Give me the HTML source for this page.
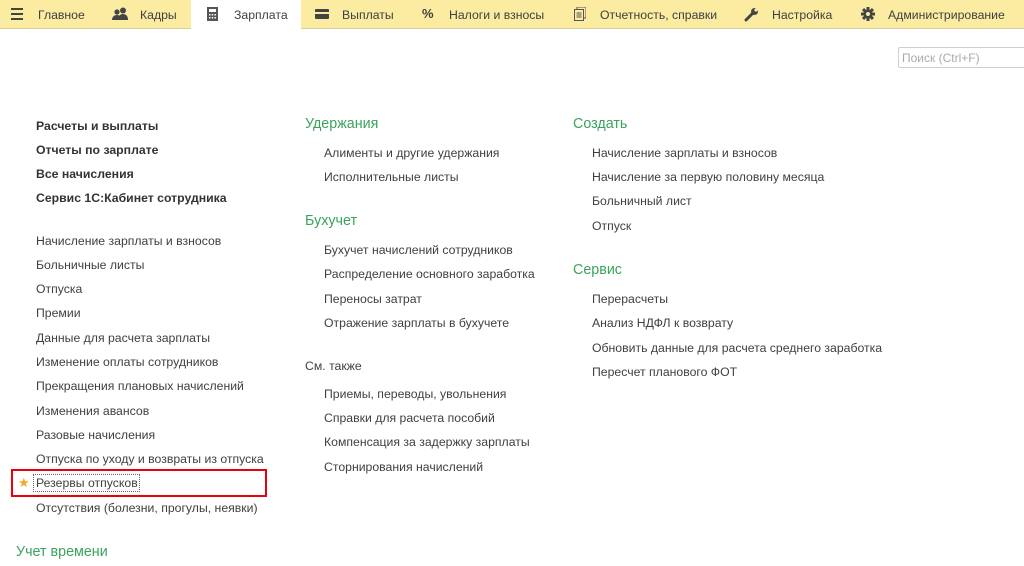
<!DOCTYPE html>
<html><head><meta charset="utf-8"><style>
*{margin:0;padding:0;box-sizing:border-box}
body{width:1024px;height:566px;overflow:hidden;background:#fff;font-family:"Liberation Sans",Arial,sans-serif;font-size:12.25px;color:#404040;position:relative}
.bar{position:absolute;left:0;top:0;width:1024px;height:29px;background:#fbeca1;border-bottom:1px solid #d9cf9a}
.act{position:absolute;left:191px;top:0;width:110px;height:30px;background:#fff}
.t{position:absolute;white-space:nowrap;line-height:16px;margin-top:1px}
.tab{top:6px;color:#404040;font-size:12.25px}
.ic{position:absolute}
.h{color:#3aa35d;font-size:14.3px}
.b{font-weight:bold;color:#333}
.search{position:absolute;left:898px;top:47px;width:130px;height:21px;border:1px solid #cfcfcf;border-radius:2px;color:#aaa;font-size:12px;padding:3px 0 0 3px}
.red{position:absolute;left:11px;top:469px;width:256px;height:28px;border:2px solid #e8000d}
.dot{position:absolute;left:33px;top:474px;width:107px;height:18px;border:1px dotted #666}
</style></head><body>
<div class="bar"></div><div class="act"></div>
<svg class="ic" style="left:11px;top:8px" width="12" height="12"><rect x="0" y="0" width="12" height="2" fill="#444"/><rect x="0" y="5" width="12" height="2" fill="#444"/><rect x="0" y="10" width="12" height="2" fill="#444"/></svg>
<div class="t tab" style="left:38px">Главное</div>
<svg class="ic" style="left:112px;top:7px" width="17" height="14"><circle cx="11" cy="3.5" r="3" fill="#444"/><path d="M6 13c0-4 2-6 5-6s5 2 5 6z" fill="#444"/><circle cx="5" cy="5" r="2.6" fill="#444"/><path d="M0 13c0-3 2-5 5-5s4 2 4 5z" fill="#444"/></svg>
<div class="t tab" style="left:140px">Кадры</div>
<svg class="ic" style="left:207px;top:7px" width="11" height="14"><rect x="0" y="0" width="11" height="14" fill="#555"/><rect x="2" y="2" width="7" height="3" fill="#fff"/><g fill="#fff"><rect x="2" y="7" width="1.5" height="1.5"/><rect x="4.7" y="7" width="1.5" height="1.5"/><rect x="7.4" y="7" width="1.5" height="1.5"/><rect x="2" y="10" width="1.5" height="1.5"/><rect x="4.7" y="10" width="1.5" height="1.5"/><rect x="7.4" y="10" width="1.5" height="1.5"/></g></svg>
<div class="t tab" style="left:234px">Зарплата</div>
<svg class="ic" style="left:315px;top:9px" width="14" height="10"><rect width="14" height="10" rx="1" fill="#444"/><rect y="3" width="14" height="2" fill="#fbeca1"/></svg>
<div class="t tab" style="left:342px">Выплаты</div>
<div class="t tab" style="left:422px;font-weight:bold;font-size:13px;top:5px">%</div>
<div class="t tab" style="left:449px">Налоги и взносы</div>
<svg class="ic" style="left:574px;top:7px" width="12" height="14"><rect x="3" y="0" width="9" height="11" fill="none" stroke="#555"/><rect x="0.5" y="2.5" width="9" height="11" fill="#fbeca1" stroke="#555"/><path d="M2.5 6h5M2.5 8h5M2.5 10h5" stroke="#555"/></svg>
<div class="t tab" style="left:600px">Отчетность, справки</div>
<svg class="ic" style="left:744px;top:7px" width="15" height="15"><path d="M2 13l6-6" stroke="#444" stroke-width="3" stroke-linecap="round"/><circle cx="10.5" cy="4.5" r="3.5" fill="#444"/><circle cx="12" cy="3" r="1.6" fill="#fbeca1"/></svg>
<div class="t tab" style="left:772px">Настройка</div>
<svg class="ic" style="left:861px;top:7px" width="14" height="14"><g transform="translate(7 7)" fill="#444"><circle r="4.5"/><rect x="-1.5" y="-7" width="3" height="14"/><rect x="-7" y="-1.5" width="14" height="3"/><rect x="-1.5" y="-7" width="3" height="14" transform="rotate(45)"/><rect x="-1.5" y="-7" width="3" height="14" transform="rotate(-45)"/><circle r="2" fill="#fbeca1"/></g></svg>
<div class="t tab" style="left:888px">Администрирование</div>

<div class="search">Поиск (Ctrl+F)</div>

<div class="t b" style="left:36px;top:117px">Расчеты и выплаты</div>
<div class="t b" style="left:36px;top:141px">Отчеты по зарплате</div>
<div class="t b" style="left:36px;top:165px">Все начисления</div>
<div class="t b" style="left:36px;top:189px">Сервис 1С:Кабинет сотрудника</div>
<div class="t" style="left:36px;top:232px">Начисление зарплаты и взносов</div>
<div class="t" style="left:36px;top:256px">Больничные листы</div>
<div class="t" style="left:36px;top:280px">Отпуска</div>
<div class="t" style="left:36px;top:304px">Премии</div>
<div class="t" style="left:36px;top:329px">Данные для расчета зарплаты</div>
<div class="t" style="left:36px;top:353px">Изменение оплаты сотрудников</div>
<div class="t" style="left:36px;top:377px">Прекращения плановых начислений</div>
<div class="t" style="left:36px;top:402px">Изменения авансов</div>
<div class="t" style="left:36px;top:426px">Разовые начисления</div>
<div class="t" style="left:36px;top:450px">Отпуска по уходу и возвраты из отпуска</div>
<div class="red"></div><div class="dot"></div>
<div class="t" style="left:18px;top:474px;color:#f5a623;font-size:13px">★</div>
<div class="t" style="left:36px;top:474px">Резервы отпусков</div>
<div class="t" style="left:36px;top:499px">Отсутствия (болезни, прогулы, неявки)</div>
<div class="t h" style="left:16px;top:543px">Учет времени</div>

<div class="t h" style="left:305px;top:115px">Удержания</div>
<div class="t" style="left:324px;top:144px">Алименты и другие удержания</div>
<div class="t" style="left:324px;top:168px">Исполнительные листы</div>
<div class="t h" style="left:305px;top:212px">Бухучет</div>
<div class="t" style="left:324px;top:241px">Бухучет начислений сотрудников</div>
<div class="t" style="left:324px;top:265px">Распределение основного заработка</div>
<div class="t" style="left:324px;top:290px">Переносы затрат</div>
<div class="t" style="left:324px;top:314px">Отражение зарплаты в бухучете</div>
<div class="t" style="left:305px;top:357px">См. также</div>
<div class="t" style="left:324px;top:385px">Приемы, переводы, увольнения</div>
<div class="t" style="left:324px;top:409px">Справки для расчета пособий</div>
<div class="t" style="left:324px;top:433px">Компенсация за задержку зарплаты</div>
<div class="t" style="left:324px;top:458px">Сторнирования начислений</div>

<div class="t h" style="left:573px;top:115px">Создать</div>
<div class="t" style="left:592px;top:144px">Начисление зарплаты и взносов</div>
<div class="t" style="left:592px;top:168px">Начисление за первую половину месяца</div>
<div class="t" style="left:592px;top:192px">Больничный лист</div>
<div class="t" style="left:592px;top:217px">Отпуск</div>
<div class="t h" style="left:573px;top:261px">Сервис</div>
<div class="t" style="left:592px;top:290px">Перерасчеты</div>
<div class="t" style="left:592px;top:314px">Анализ НДФЛ к возврату</div>
<div class="t" style="left:592px;top:339px">Обновить данные для расчета среднего заработка</div>
<div class="t" style="left:592px;top:363px">Пересчет планового ФОТ</div>
</body></html>
